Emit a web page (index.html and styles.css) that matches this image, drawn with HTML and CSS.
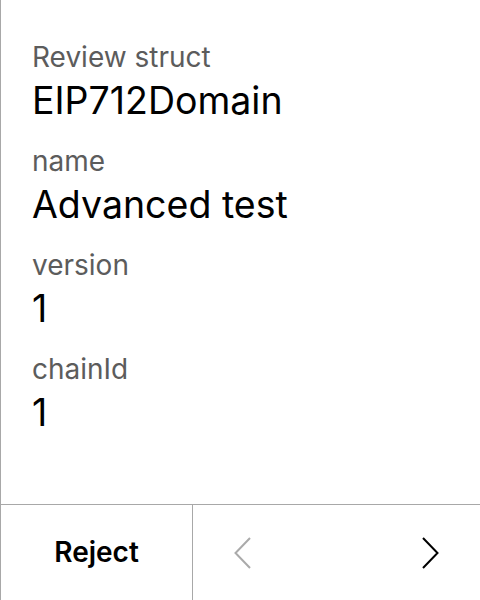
FILE: index.html
```html
<!DOCTYPE html>
<html>
<head>
<meta charset="utf-8">
<link rel="stylesheet" href="styles.css">
</head>
<body>
<div class="screen">
  <div class="content">
    <div class="field">
      <div class="label">Review struct</div>
      <div class="value">EIP712Domain</div>
    </div>
    <div class="field">
      <div class="label">name</div>
      <div class="value">Advanced test</div>
    </div>
    <div class="field">
      <div class="label">version</div>
      <div class="value">1</div>
    </div>
    <div class="field">
      <div class="label">chainId</div>
      <div class="value">1</div>
    </div>
  </div>
  <div class="footer">
    <div class="reject">Reject</div>
    <div class="nav">
      <svg class="chev prev" width="20" height="32" viewBox="0 0 20 32"><path d="M17 1 L2.5 16 L17 31" fill="none" stroke="#aaaaaa" stroke-width="2"/></svg>
      <svg class="chev next" width="20" height="32" viewBox="0 0 20 32"><path d="M3 1 L17.5 16 L3 31" fill="none" stroke="#000000" stroke-width="2"/></svg>
    </div>
  </div>
</div>
</body>
</html>
```

FILE: styles.css
```css
html, body {
  margin: 0;
  padding: 0;
  background: #ffffff;
}
.screen {
  width: 480px;
  height: 600px;
  box-sizing: border-box;
  border-left: 1px solid #a8a8a8;
  display: flex;
  flex-direction: column;
  font-family: Inter, "Noto Sans", sans-serif;
  color: #000;
}
.content {
  flex: 1;
  padding: 40px 0 0 31px;
  display: flex;
  flex-direction: column;
  gap: 21px;
}
.field {
  display: flex;
  flex-direction: column;
  gap: 4px;
}
.label {
  font-size: 28px;
  line-height: 34px;
  color: #5c5c5c;
}
.value {
  font-size: 37.5px;
  line-height: 45px;
  color: #000;
}
.footer {
  height: 96px;
  border-top: 1px solid #a8a8a8;
  display: flex;
  box-sizing: border-box;
}
.reject {
  width: 191px;
  border-right: 1px solid #a8a8a8;
  display: flex;
  align-items: center;
  justify-content: center;
  font-size: 28px;
  font-weight: 600;
  padding-bottom: 1px;
}
.nav {
  flex: 1;
  display: flex;
  align-items: center;
  justify-content: space-between;
  padding: 0 40px 0 40px;
}
```
